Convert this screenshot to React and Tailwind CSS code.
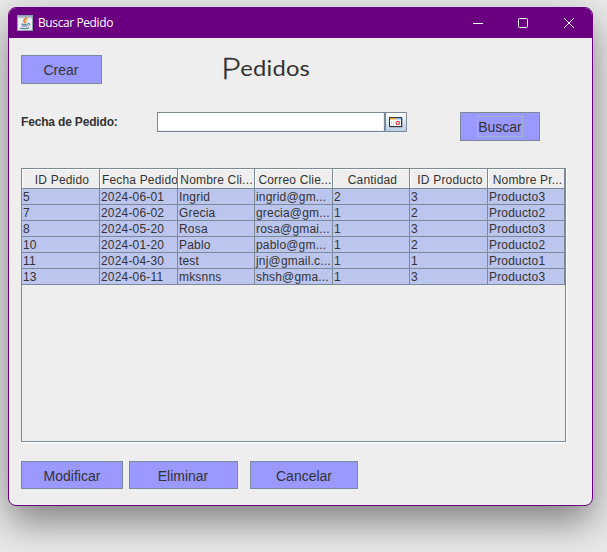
const columns = ['ID Pedido', 'Fecha Pedido', 'Nombre Cli...', 'Correo Clie...', 'Cantidad', 'ID Producto', 'Nombre Pr...'];

const rows = [
  ['5', '2024-06-01', 'Ingrid', 'ingrid@gm...', '2', '3', 'Producto3'],
  ['7', '2024-06-02', 'Grecia', 'grecia@gm...', '1', '2', 'Producto2'],
  ['8', '2024-05-20', 'Rosa', 'rosa@gmai...', '1', '3', 'Producto3'],
  ['10', '2024-01-20', 'Pablo', 'pablo@gm...', '1', '2', 'Producto2'],
  ['11', '2024-04-30', 'test', 'jnj@gmail.c...', '1', '1', 'Producto1'],
  ['13', '2024-06-11', 'mksnns', 'shsh@gma...', '1', '3', 'Producto3'],
];

const grid = 'grid grid-cols-[78px_78px_77px_78px_77px_78px_77px]';

function Button({ className = '', children }) {
  return (
    <button
      className={`flex shrink-0 items-center justify-center border border-[#7a8a99] bg-[#9999ff] text-[14px] leading-none text-[#333333] ${className}`}
    >
      {children}
    </button>
  );
}

function JavaIcon() {
  return (
    <svg width="16" height="16" viewBox="0 0 16 16" fill="none">
      <defs>
        <linearGradient id="java" x1="0" y1="0" x2="0" y2="1">
          <stop offset="0" stopColor="#8b9dab" />
          <stop offset=".25" stopColor="#eef1f3" />
          <stop offset="1" stopColor="#e3e7ea" />
        </linearGradient>
      </defs>
      <rect x=".5" y=".5" width="15" height="15" fill="url(#java)" stroke="#8ea0ae" />
      <path d="M9.200 2c.8 1.700-2.900 2.400-2.400 4.100.2.800.9 1.100 1.200 1.900" stroke="#e07a28" strokeWidth="1.500" />
      <path d="M10.600 4.200c-1.700.7-2.400 1.200-1.600 2.100.5.600.2 1.200-.4 1.700" stroke="#e8943c" />
      <path d="M4.500 9.200h6.300M5 11h5.200M3 12.900c2.400.8 7 .8 9.200-.1" stroke="#476f91" strokeWidth="1.100" />
      <path d="M11 8.500c2.300-.5 2.500 1.500.2 2.300" stroke="#476f91" />
    </svg>
  );
}

function CalendarIcon() {
  return (
    <svg width="14" height="11" viewBox="0 0 14 11" fill="none">
      <path d="M1 11h13V1h-1v9H1z" fill="#b0b4ba" />
      <rect width="13" height="10" fill="#333c46" />
      <rect x="1" y="1" width="11" height="8" fill="#fff" />
      <rect x="1" y="1" width="5" height="1.500" fill="#f5a623" />
      <rect x="6" y="1" width="6" height="1.500" fill="#84b2dc" />
      <path d="M2.500 4v5M4.500 4v5" stroke="#dddddd" />
      <circle cx="8.800" cy="6" r="1.600" stroke="#e5484d" strokeWidth="1.300" />
    </svg>
  );
}

export default function App() {
  return (
    <div className="h-[552px] w-[607px] overflow-hidden bg-[#eaeaea] pl-2 pt-[7px] font-['Liberation_Sans',Arial,sans-serif] text-[#333333]">
      <div className="flex h-[499px] w-[585px] flex-col overflow-hidden rounded-lg border border-[#6a0080] bg-[#eeeeee] shadow-[0_16px_38px_rgba(0,0,0,0.46)]">
        <header className="flex h-[30px] shrink-0 items-center bg-[#6a0080] pl-2 text-white">
          <JavaIcon />
          <span className="ml-[5px] flex-1 whitespace-nowrap font-['Open_Sans',sans-serif] text-[12px] leading-none tracking-[-0.4px]">
            Buscar Pedido
          </span>
          <svg className="mr-4 shrink-0" width="104" height="12" viewBox="0 0 104 12" fill="none" stroke="#fff">
            <path d="M1 6.500h10" />
            <rect x="46.500" y="1.500" width="9" height="9" rx="1" />
            <path d="M92 1l10 10M102 1L92 11" />
          </svg>
        </header>

        <main className="flex flex-col pl-3">
          <div className="flex h-[74px] items-start pt-[17px]">
            <Button className="h-[29px] w-[81px] pr-px pt-px">Crear</Button>
            <h1 className="ml-[119px] flex origin-left scale-x-[1.13] items-baseline whitespace-nowrap font-['Lato',sans-serif] text-[21px] font-normal leading-[20px]">
              <span className="relative top-[3px] mr-[3px] w-[14px] text-[30px] font-light leading-[18px] [-webkit-text-stroke:0.4px_#333333]">P</span>
              <span className="tracking-[0.2px]">edidos</span>
            </h1>
          </div>

          <div className="flex h-[56px] items-start">
            <label htmlFor="fecha" className="w-[136px] whitespace-nowrap pt-[3px] text-[12px] font-bold leading-[14px] tracking-[-0.17px]">
              Fecha de Pedido:
            </label>
            <input id="fecha" className="h-5 w-[228px] border border-[#7a8a99] bg-white shadow-[inset_-1px_-1px_0_#eeeeee]" />
            <button className="flex h-5 w-[22px] items-center justify-center border border-[#7a8a99] bg-linear-to-b from-white to-[#b8cfe5]">
              <CalendarIcon />
            </button>
            <Button className="ml-[53px] h-[29px] w-20">
              <span className="flex h-[21px] w-[46px] items-center justify-center border border-[#a3b8cc] pt-px">Buscar</span>
            </Button>
          </div>

          <div className="h-[275px] w-[546px] border-b border-r border-white">
            <div className="h-[274px] w-[545px] border border-[#7a8a99] text-[12px] tracking-[0.18px]">
              <div className={`${grid} h-5`}>
                {columns.map((c, i) => (
                  <div
                    key={c}
                    className={`flex items-center justify-center overflow-hidden whitespace-nowrap border-b border-r border-[#7a8a99] pt-[2px] leading-[14px] shadow-[inset_1px_1px_0_#ffffff] ${i === 2 ? 'pl-px' : 'pl-[3px]'}`}
                  >
                    {c}
                  </div>
                ))}
              </div>
              {rows.map((r) => (
                <div key={r[0]} className={`${grid} h-4 bg-[#bcc5ed]`}>
                  {r.map((v, i) => (
                    <div key={i} className="overflow-hidden whitespace-nowrap border-b border-r border-[#7a8a99] pl-px leading-[17px]">
                      {v}
                    </div>
                  ))}
                </div>
              ))}
            </div>
          </div>

          <div className="flex pt-[18px]">
            <Button className="h-7 w-[102px] pt-px">Modificar</Button>
            <Button className="ml-1.5 h-7 w-[109px] pr-px pt-px">Eliminar</Button>
            <Button className="ml-3 h-7 w-[108px] pt-px">Cancelar</Button>
          </div>
        </main>
      </div>
    </div>
  );
}
